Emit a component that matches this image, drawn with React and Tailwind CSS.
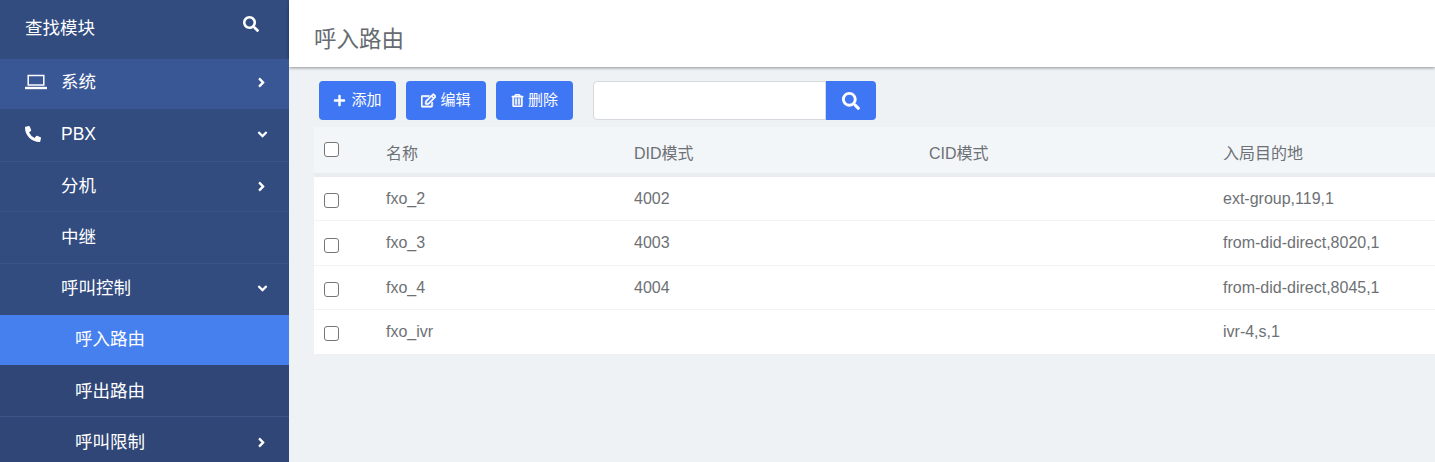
import { FaSearch, FaPlus, FaRegEdit, FaRegTrashAlt, FaPhoneAlt, FaAngleRight, FaAngleDown } from "react-icons/fa"

const fontStack = "font-['Liberation_Sans','Noto_Sans_CJK_SC',sans-serif]"

function LaptopIcon() {
  return (
    <svg width="22" height="16" viewBox="0 0 22 16" fill="none" stroke="white">
      <rect x="3.2" y="1.5" width="15.6" height="9.5" strokeWidth="1.5" />
      <path d="M0 14h22" strokeWidth="2.4" />
    </svg>
  )
}

function NavRow({ label, icon, arrow, h = "h-[51px]", indent = "pl-[61px]", bg = "bg-[#324c80]", border = true, nudge = "" }) {
  return (
    <div className={`${h} ${bg} ${indent} ${nudge} ${border ? "border-t border-[#3b5589]" : ""} relative flex shrink-0 items-center text-[17.5px] text-white`}>
      {icon && <span className="absolute left-[25px] flex items-center">{icon}</span>}
      <span>{label}</span>
      {arrow === "right" && <FaAngleRight className="absolute left-[254px] text-[15px]" />}
      {arrow === "down" && <FaAngleDown className="absolute left-[255px] text-[15px]" />}
    </div>
  )
}

function ToolButton({ icon, label, w, gap = "gap-1" }) {
  return (
    <button className={`${w} ${gap} flex h-[39px] items-center justify-center rounded-[4px] bg-[#3f76f4] text-[15px] text-white`}>
      {icon}
      {label}
    </button>
  )
}

const line = "border-b border-[#f1f3f5]"

const rows = [
  { name: "fxo_2", did: "4002", dest: "ext-group,119,1", h: "h-[44px]", line, box: "pt-[3px]", text: "" },
  { name: "fxo_3", did: "4003", dest: "from-did-direct,8020,1", h: "h-[45px]", line, box: "pt-[5px]", text: "" },
  { name: "fxo_4", did: "4004", dest: "from-did-direct,8045,1", h: "h-[44px]", line, box: "pt-[3px]", text: "" },
  { name: "fxo_ivr", did: "", dest: "ivr-4,s,1", h: "h-[44px]", line: "", box: "pt-[3px]", text: "pb-[1px]" },
]

export default function App() {
  return (
    <div className={`${fontStack} flex h-screen w-full overflow-hidden bg-[#eef2f5]`}>
      {/* SIDEBAR */}
      <div className="flex w-[289px] shrink-0 flex-col overflow-hidden bg-[#324c80]">
        <div className="relative flex h-[59px] shrink-0 items-center pb-[2px] pl-[25px] text-[17.5px] text-white">
          查找模块
          <FaSearch className="absolute left-[243px] top-[16px] text-[16px]" />
        </div>
        <NavRow label="系统" icon={<LaptopIcon />} arrow="right" h="h-[50px]" bg="bg-[#3a5795]" border={false} nudge="pb-[4px]" />
        <NavRow label="PBX" icon={<FaPhoneAlt className="text-[16px]" />} arrow="down" h="h-[52px]" border={false} nudge="pb-[2px]" />
        <NavRow label="分机" arrow="right" h="h-[50px]" />
        <NavRow label="中继" h="h-[52px]" />
        <NavRow label="呼叫控制" arrow="down" h="h-[52px]" nudge="pb-[2px]" />
        <NavRow label="呼入路由" h="h-[50px]" indent="pl-[75px]" bg="bg-[#4680ef]" border={false} nudge="pb-[2px]" />
        <NavRow label="呼出路由" h="h-[51px]" indent="pl-[75px]" bg="bg-[#2f4677]" border={false} nudge="pt-[2px]" />
        <NavRow label="呼叫限制" arrow="right" h="h-[52px]" indent="pl-[75px]" bg="bg-[#2f4677]" />
      </div>

      {/* MAIN */}
      <div className="flex min-w-0 flex-1 flex-col">
        <div className="flex h-[67px] shrink-0 items-center bg-white pl-[25px] pt-[12px] text-[22.5px] text-[#666b70] shadow-[0_1px_3px_rgba(0,0,0,0.4)]">
          呼入路由
        </div>

        <div className="mt-[14px] flex h-[39px] shrink-0 pl-[30px]">
          <ToolButton w="w-[77px]" gap="gap-[5px]" icon={<FaPlus className="text-[13px]" />} label="添加" />
          <div className="ml-[10px]">
            <ToolButton w="w-[80px]" icon={<FaRegEdit className="text-[15px]" stroke="currentColor" strokeWidth="24" />} label="编辑" />
          </div>
          <div className="ml-[10px]">
            <ToolButton w="w-[77px]" icon={<FaRegTrashAlt className="text-[13px]" stroke="currentColor" strokeWidth="24" />} label="删除" />
          </div>
          <div className="ml-[20px] flex">
            <input className="h-[39px] w-[233px] rounded-l-[4px] border border-[#d5d8dc] bg-white outline-none" />
            <button className="flex h-[39px] w-[50px] items-center justify-center rounded-r-[4px] bg-[#3f76f4] text-white">
              <FaSearch className="text-[18px]" />
            </button>
          </div>
        </div>

        <table className="ml-[25px] mt-[7px] w-[1121px] table-fixed border-separate border-spacing-0 text-[16px] text-[#6d7175]">
          <colgroup>
            <col className="w-[60px]" />
            <col className="w-[248px]" />
            <col className="w-[295px]" />
            <col className="w-[294px]" />
            <col />
          </colgroup>
          <thead>
            <tr className="h-[50px] bg-[#f3f6f9]">
              <th className="border-b-[4px] border-[#e9edf1] pb-[2px] pl-[10px] text-left font-normal">
                <input type="checkbox" className="block h-[15px] w-[15px] appearance-none rounded-[3px] border border-[#767676] bg-white" />
              </th>
              <th className="border-b-[4px] border-[#e9edf1] pl-[12px] pt-[8px] text-left font-normal">名称</th>
              <th className="border-b-[4px] border-[#e9edf1] pl-[12px] pt-[8px] text-left font-normal">DID模式</th>
              <th className="border-b-[4px] border-[#e9edf1] pl-[12px] pt-[8px] text-left font-normal">CID模式</th>
              <th className="border-b-[4px] border-[#e9edf1] pl-[12px] pt-[8px] text-left font-normal">入局目的地</th>
            </tr>
          </thead>
          <tbody className="bg-white">
            {rows.map((r) => (
              <tr key={r.name} className={r.h}>
                <td className={`${r.line} ${r.box} pl-[10px]`}>
                  <input type="checkbox" className="block h-[15px] w-[15px] appearance-none rounded-[3px] border border-[#767676] bg-white" />
                </td>
                <td className={`${r.line} ${r.text} pl-[12px]`}>{r.name}</td>
                <td className={`${r.line} ${r.text} pl-[12px]`}>{r.did}</td>
                <td className={`${r.line} ${r.text} pl-[12px]`}></td>
                <td className={`${r.line} ${r.text} pl-[12px]`}>{r.dest}</td>
              </tr>
            ))}
          </tbody>
        </table>
      </div>
    </div>
  )
}
